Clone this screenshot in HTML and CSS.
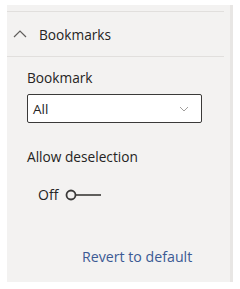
FILE: index.html
```html
<!DOCTYPE html>
<html lang="en">
<head>
  <meta charset="UTF-8" />
  <title>Bookmarks</title>
  <link rel="stylesheet" href="styles.css">
</head>
<body>
  <div class="pane">
    <div class="section">
      <div class="section-head">
        <svg class="chev-up" width="14" height="9" viewBox="0 0 14 9"><path d="M1 8 L7 2 L13 8" fill="none" stroke="#605e5c" stroke-width="1.2"/></svg>
        <span>Bookmarks</span>
      </div>
      <div class="section-body">
        <div class="label">Bookmark</div>
        <div class="dropdown">
          <span>All</span>
          <svg width="10" height="6" viewBox="0 0 10 6"><path d="M1 1 L5 5 L9 1" fill="none" stroke="#a19f9d" stroke-width="1"/></svg>
        </div>
        <div class="label deselect">Allow deselection</div>
        <div class="toggle">
          <span>Off</span>
          <svg width="38" height="12" viewBox="0 0 38 12"><circle cx="6" cy="6" r="4.5" fill="none" stroke="#3b3a39" stroke-width="1.8"/><line x1="10.5" y1="6" x2="36" y2="6" stroke="#3b3a39" stroke-width="1.6"/></svg>
        </div>
        <a class="revert" href="#">Revert to default</a>
      </div>
    </div>
  </div>
</body>
</html>
```

FILE: styles.css
```css
body { margin: 0; background: #fff; font-family: "Open Sans", "Noto Sans", sans-serif; color: #252423; }
.pane { margin: 5px 0 0 7px; padding-top: 6px; width: 223px; height: 271px; background: #f3f2f1; border-right: 3px solid #e8e6e4; }
.section { border-top: 1px solid #e1dfdd; margin-right: 6px; }
.section-head { display: flex; align-items: center; gap: 12px; height: 44px; padding-left: 6px; border-bottom: 1px solid #e1dfdd; font-size: 13.7px; }
.chev-up { margin-top: -2px; }
.section-body { padding: 0 0 0 20px; }
.label { font-size: 13.7px; margin-top: 11px; height: 20px; line-height: 20px; }
.dropdown { display: flex; align-items: center; justify-content: space-between; margin-top: 6px; border: 1px solid #3b3a39; border-radius: 2px; background: #fff; padding: 0 12px 0 5px; box-sizing: border-box; width: 175px; height: 29px; font-size: 13.5px; }
.dropdown svg { margin-top: 1px; }
.deselect { margin-top: 24px; }
.toggle { display: flex; align-items: center; gap: 7px; margin: 18px 0 0 11px; font-size: 14px; }
.revert { display: block; margin: 43px 0 0 55px; color: #3b5a94; text-decoration: none; font-size: 14.2px; }
```
